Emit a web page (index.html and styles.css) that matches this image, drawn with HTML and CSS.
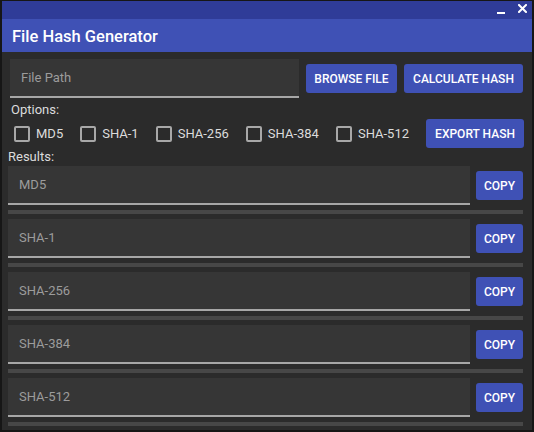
FILE: index.html
```html
<!DOCTYPE html>
<html>
<head>
<meta charset="utf-8">
<link rel="stylesheet" href="styles.css">
</head>
<body>
<div class="window">
  <div class="titlebar">
    <svg class="win-btn min" width="9" height="4" viewBox="0 0 9 4"><rect x="0" y="1" width="8" height="2" fill="#fff"/></svg>
    <svg class="win-btn close" width="9" height="9" viewBox="0 0 9 9"><path d="M1 1 L8 8 M8 1 L1 8" stroke="#fff" stroke-width="2" stroke-linecap="square"/></svg>
  </div>
  <div class="appbar">File Hash Generator</div>
  <div class="content">
    <div class="row-top">
      <div class="field path"><span class="placeholder">File Path</span></div>
      <button class="btn browse">BROWSE FILE</button>
      <button class="btn calc">CALCULATE HASH</button>
    </div>
    <div class="label options">Options:</div>
    <div class="row-options">
      <label class="check"><span class="box"></span>MD5</label>
      <label class="check"><span class="box"></span>SHA-1</label>
      <label class="check"><span class="box"></span>SHA-256</label>
      <label class="check"><span class="box"></span>SHA-384</label>
      <label class="check"><span class="box"></span>SHA-512</label>
      <button class="btn export">EXPORT HASH</button>
    </div>
    <div class="label results">Results:</div>
    <div class="result-list">
      <div class="result">
        <div class="result-row">
          <div class="field res"><span class="placeholder">MD5</span></div>
          <button class="btn copy">COPY</button>
        </div>
        <div class="bar"></div>
      </div>
      <div class="result">
        <div class="result-row">
          <div class="field res"><span class="placeholder">SHA-1</span></div>
          <button class="btn copy">COPY</button>
        </div>
        <div class="bar"></div>
      </div>
      <div class="result">
        <div class="result-row">
          <div class="field res"><span class="placeholder">SHA-256</span></div>
          <button class="btn copy">COPY</button>
        </div>
        <div class="bar"></div>
      </div>
      <div class="result">
        <div class="result-row">
          <div class="field res"><span class="placeholder">SHA-384</span></div>
          <button class="btn copy">COPY</button>
        </div>
        <div class="bar"></div>
      </div>
      <div class="result">
        <div class="result-row">
          <div class="field res"><span class="placeholder">SHA-512</span></div>
          <button class="btn copy">COPY</button>
        </div>
        <div class="bar"></div>
      </div>
    </div>
  </div>
</div>
</body>
</html>
```
FILE: styles.css
```css
* { box-sizing: border-box; }
html, body { margin: 0; padding: 0; background: #151515; }
body { width: 534px; height: 432px; overflow: hidden; font-family: Roboto, "Liberation Sans", sans-serif; }
.window {
  width: 534px; height: 432px;
  border: 2px solid #161616;
  border-top-width: 1px;
  background: #2b2b2b;
  display: flex; flex-direction: column;
}
.titlebar {
  height: 18px; background: #2f3c98; flex: none;
  display: flex; align-items: flex-start; justify-content: flex-end;
  padding-right: 5px;
}
.win-btn { display: block; }
.win-btn.min { margin-top: 10px; margin-right: 12px; }
.win-btn.close { margin-top: 3px; }
.appbar {
  height: 33px; background: #3f51b5; color: #fff; flex: none;
  font-size: 16.5px; font-weight: 500;
  padding-left: 10px; padding-top: 1px; line-height: 33px;
}
.content { flex: 1; padding: 0 9px 0 6px; display: flex; flex-direction: column; }
.row-top { display: flex; align-items: center; margin-top: 7px; margin-left: 2px; gap: 7px; }
.field {
  background: #363636; border-bottom: 2px solid #a7a7a7;
  height: 39px; display: flex; align-items: center;
  padding-left: 11px;
}
.field.path { width: 289px; }
.placeholder { color: #9c9c9c; font-size: 13px; }
.btn {
  background: #3f51b5; color: #fff; border: none; border-radius: 3px;
  font-family: Roboto, "Liberation Sans", sans-serif;
  font-size: 12px; font-weight: 500; letter-spacing: 0;
  height: 29px; padding: 0; cursor: pointer; flex: none;
}
.btn.browse { width: 91px; }
.btn.calc { width: 119px; }
.btn.export { width: 98px; margin-left: auto; margin-right: -1px; }
.btn.copy { width: 47px; }
.label { color: #dcdcdc; font-size: 13px; line-height: 16px; }
.options { margin-top: 4px; margin-left: 3px; }
.row-options { display: flex; align-items: center; height: 29px; margin-top: 1px; margin-left: 6px; gap: 17px; }
.check { display: flex; align-items: center; gap: 6px; color: #dcdcdc; font-size: 13px; white-space: nowrap; flex: none; }
.box { width: 16px; height: 16px; border: 2px solid #a8a8a8; border-radius: 2px; display: block; flex: none; }
.results { margin-top: 1px; margin-left: 0; }
.result-list { margin-top: 1px; display: flex; flex-direction: column; }
.result-row { display: flex; align-items: center; gap: 6px; }
.field.res { flex: 1; }
.bar { height: 4px; background: #474747; margin: 5px 0; }
```
